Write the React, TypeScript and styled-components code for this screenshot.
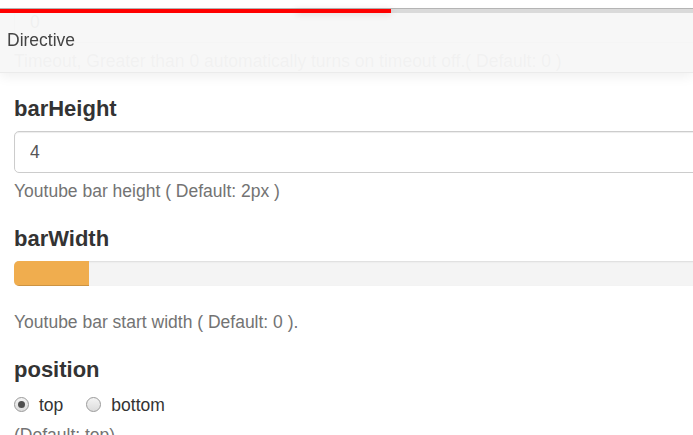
import React from "react";
import styled, { createGlobalStyle } from "styled-components";

const Global = createGlobalStyle`
  html, body {
    margin: 0;
    padding: 0;
    overflow: hidden;
    background: #fff;
  }
  body {
    font-family: "Liberation Sans", Arial, Helvetica, sans-serif;
    font-size: 17.5px;
    line-height: 1.43;
    color: #333;
  }
  * { box-sizing: border-box; }
`;

const Header = styled.header`
  position: fixed;
  top: 0;
  left: 0;
  right: 0;
  z-index: 10;
`;

const TopStrip = styled.div`
  height: 8px;
  background: #fff;
`;

const Track = styled.div`
  position: relative;
  z-index: 2;
  height: 5px;
  border-top: 1px solid #b4b4b4;
  background: #dadada;
`;

const Fill = styled.div<{ $w: number }>`
  position: relative;
  height: 4px;
  width: ${(p) => p.$w}px;
  background: #ff0000;
`;

const Peg = styled.span`
  position: absolute;
  right: 0;
  top: 0;
  width: 95px;
  height: 4px;
  box-shadow: 0 1px 6px rgba(140, 90, 90, 0.22);
`;

const Panel = styled.div`
  position: relative;
  z-index: 1;
  height: 60px;
  padding: 15px 0 0 7px;
  background: rgba(247, 247, 247, 0.955);
  border-bottom: 1px solid rgba(0, 0, 0, 0.05);
  box-shadow: 0 3px 12px rgba(0, 0, 0, 0.07);
  color: #444;
  font-size: 17.5px;
  line-height: 24.6px;
`;

const Main = styled.main`
  width: 780px;
  padding: 1px 0 0 14px;
`;

const Group = styled.section``;

const Heading = styled.h4`
  margin: 0 0 10.3px;
  font-size: 22px;
  line-height: 24.2px;
  font-weight: 700;
  color: #333;
`;

const TextInput = styled.input`
  display: block;
  width: 100%;
  height: 42px;
  margin: 0;
  padding: 0 15px;
  border: 1px solid #ccc;
  border-radius: 5px;
  background: #fff;
  box-shadow: inset 0 1px 1px rgba(0, 0, 0, 0.075);
  color: #555;
  font-family: inherit;
  font-size: 17.5px;
  outline: none;
`;

const Help = styled.p`
  margin: 6px 0 23px;
  color: #737373;
  line-height: 24.6px;
`;

const Progress = styled.div`
  height: 24.7px;
  margin-bottom: 24.6px;
  overflow: hidden;
  border-radius: 5px;
  background: #f4f4f4;
  box-shadow: inset 0 1px 2px rgba(0, 0, 0, 0.1);
`;

const ProgressFill = styled.div<{ $w: number }>`
  height: 100%;
  width: ${(p) => p.$w}px;
  background: #f0ad4e;
  box-shadow: inset 0 -1px 0 rgba(0, 0, 0, 0.15);
`;

const RadioRow = styled.div`
  display: flex;
  align-items: center;
  height: 24.6px;
`;

const RadioLabel = styled.label`
  display: flex;
  align-items: center;
  margin-right: 23px;
  color: #333;
  line-height: 24.6px;
`;

const Radio = styled.span<{ $checked?: boolean }>`
  position: relative;
  width: 15px;
  height: 15px;
  margin-right: 10px;
  border-radius: 50%;
  border: 1px solid #9a9a9a;
  background: linear-gradient(#f4f4f4, #dcdcdc);
  &::after {
    content: "";
    display: ${(p) => (p.$checked ? "block" : "none")};
    position: absolute;
    left: 3px;
    top: 3px;
    width: 7px;
    height: 7px;
    border-radius: 50%;
    background: #505050;
  }
`;

export default function App() {
  return (
    <>
      <Global />
      <Main>
        <Group>
          <TextInput defaultValue="0" readOnly />
          <Help>Timeout, Greater than 0 automatically turns on timeout off.( Default: 0 )</Help>
        </Group>
        <Group>
          <Heading>barHeight</Heading>
          <TextInput defaultValue="4" readOnly />
          <Help>Youtube bar height ( Default: 2px )</Help>
        </Group>
        <Group>
          <Heading>barWidth</Heading>
          <Progress>
            <ProgressFill $w={75} />
          </Progress>
          <Help>Youtube bar start width ( Default: 0 ).</Help>
        </Group>
        <Group>
          <Heading>position</Heading>
          <RadioRow>
            <RadioLabel>
              <Radio $checked />
              top
            </RadioLabel>
            <RadioLabel>
              <Radio />
              bottom
            </RadioLabel>
          </RadioRow>
          <Help>(Default: top)</Help>
        </Group>
      </Main>
      <Header>
        <TopStrip />
        <Track>
          <Fill $w={391}>
            <Peg />
          </Fill>
        </Track>
        <Panel>Directive</Panel>
      </Header>
    </>
  );
}
